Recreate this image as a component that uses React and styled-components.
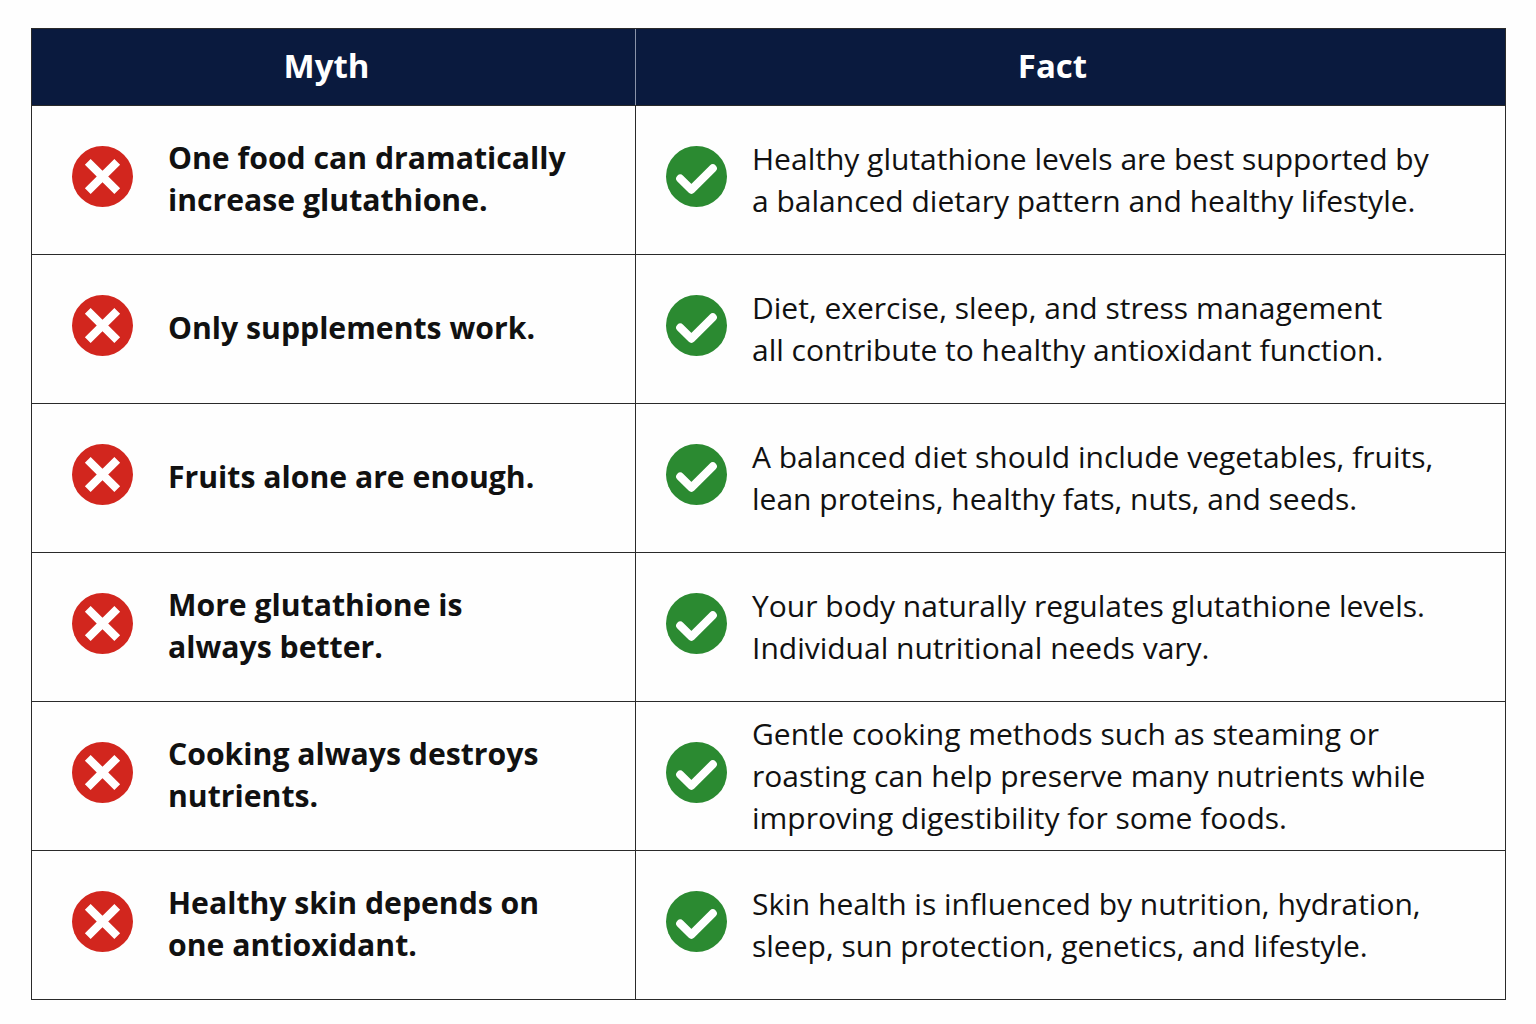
import React from "react";
import styled, { createGlobalStyle } from "styled-components";

const Global = createGlobalStyle`
  html, body { margin: 0; padding: 0; background: #ffffff; }
  body { font-family: "Open Sans", Lato, sans-serif; }
`;

const Page = styled.div`
  width: 1536px;
  height: 1024px;
  padding: 28px 0 0 31px;
  box-sizing: border-box;
  background: #fefefe;
`;

const Table = styled.div`
  display: grid;
  grid-template-columns: 603px 1fr;
  grid-template-rows: 76px repeat(6, 149px);
  width: 1475px;
  border: 1.5px solid #2a2a2a;
  box-sizing: border-box;
`;

const HeadCell = styled.div`
  background: #0a1a3e;
  color: #ffffff;
  font-weight: 700;
  font-size: 33px;
  display: flex;
  align-items: center;
  justify-content: center;
  padding-right: ${(p) => p.$shift}px;
  padding-bottom: 4px;
  border-left: ${(p) => (p.$divider ? "1.5px solid #8a93a8" : "none")};
`;

const Cell = styled.div`
  display: flex;
  align-items: center;
  gap: ${(p) => p.$gap}px;
  padding-left: ${(p) => p.$pad}px;
  border-top: 1.5px solid #2a2a2a;
  border-left: ${(p) => (p.$divider ? "1.5px solid #2a2a2a" : "none")};
  background: #fefefe;
`;

const Text = styled.div`
  font-size: ${(p) => (p.$bold ? 30.2 : 30)}px;
  line-height: 42px;
  color: #111;
  font-weight: ${(p) => (p.$bold ? 700 : 400)};
  letter-spacing: 0;
  white-space: pre-line;
  margin-top: ${(p) => (p.$bold ? -2 : 0)}px;
`;

const Badge = styled.svg`
  flex: none;
  width: 61px;
  height: 61px;
  margin-top: -7px;
`;

const CrossIcon = () => (
  <Badge viewBox="0 0 60 60">
    <circle cx="30" cy="30" r="30" fill="#d2261e" />
    <path d="M15.5 15.5 L44.5 44.5 M44.5 15.5 L15.5 44.5" stroke="#fff" strokeWidth="8" strokeLinecap="butt" />
  </Badge>
);

const CheckIcon = () => (
  <Badge viewBox="0 0 60 60">
    <circle cx="30" cy="30" r="30" fill="#2b8a31" />
    <path d="M14 32 L25 43 L46 22" stroke="#fff" strokeWidth="8" fill="none" strokeLinecap="round" strokeLinejoin="round" />
  </Badge>
);

const rows = [
  ["One food can dramatically\nincrease glutathione.", "Healthy glutathione levels are best supported by\na balanced dietary pattern and healthy lifestyle."],
  ["Only supplements work.", "Diet, exercise, sleep, and stress management\nall contribute to healthy antioxidant function."],
  ["Fruits alone are enough.", "A balanced diet should include vegetables, fruits,\nlean proteins, healthy fats, nuts, and seeds."],
  ["More glutathione is\nalways better.", "Your body naturally regulates glutathione levels.\nIndividual nutritional needs vary."],
  ["Cooking always destroys\nnutrients.", "Gentle cooking methods such as steaming or\nroasting can help preserve many nutrients while\nimproving digestibility for some foods."],
  ["Healthy skin depends on\none antioxidant.", "Skin health is influenced by nutrition, hydration,\nsleep, sun protection, genetics, and lifestyle."],
];

export default function App() {
  return (
    <>
      <Global />
      <Page>
        <Table>
          <HeadCell $shift={14}>Myth</HeadCell>
          <HeadCell $divider $shift={36}>Fact</HeadCell>
          {rows.map(([myth, fact], i) => (
            <React.Fragment key={i}>
              <Cell $pad={40} $gap={35}>
                <CrossIcon />
                <Text $bold>{myth}</Text>
              </Cell>
              <Cell $divider $pad={30} $gap={25}>
                <CheckIcon />
                <Text>{fact}</Text>
              </Cell>
            </React.Fragment>
          ))}
        </Table>
      </Page>
    </>
  );
}
